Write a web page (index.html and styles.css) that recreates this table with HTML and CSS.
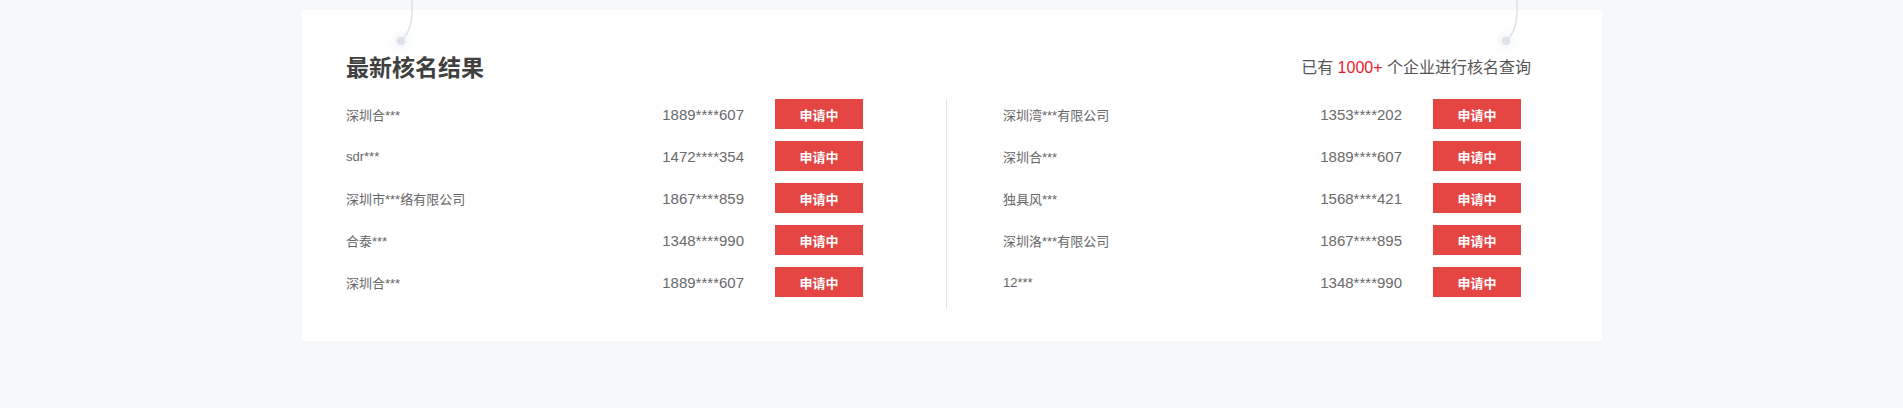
FILE: index.html
```html
<!DOCTYPE html>
<html lang="zh-CN">
<head>
<meta charset="utf-8">
<title>最新核名结果</title>
<link rel="stylesheet" href="styles.css">
</head>
<body>
<div class="page">
  <section class="card">
    <svg class="hook hook-left" width="40" height="60" viewBox="0 0 40 60">
      <defs>
        <radialGradient id="halo1">
          <stop offset="0" stop-color="#e9ecf2" stop-opacity="0.9"/>
          <stop offset="1" stop-color="#ffffff" stop-opacity="0"/>
        </radialGradient>
      </defs>
      <circle cx="14" cy="41" r="15" fill="url(#halo1)"/>
      <path d="M25 0 C26 18 24 31 16 39" fill="none" stroke="#dde1ea" stroke-width="1.5"/>
      <circle cx="14" cy="41" r="4" fill="#dde1ea"/>
    </svg>
    <svg class="hook hook-right" width="40" height="60" viewBox="0 0 40 60">
      <defs>
        <radialGradient id="halo2">
          <stop offset="0" stop-color="#e9ecf2" stop-opacity="0.9"/>
          <stop offset="1" stop-color="#ffffff" stop-opacity="0"/>
        </radialGradient>
      </defs>
      <circle cx="14" cy="41" r="15" fill="url(#halo2)"/>
      <path d="M25 0 C26 18 24 31 16 39" fill="none" stroke="#dde1ea" stroke-width="1.5"/>
      <circle cx="14" cy="41" r="4" fill="#dde1ea"/>
    </svg>

    <header class="card-head">
      <h2 class="title">最新核名结果</h2>
      <p class="summary">已有 <span class="count">1000+</span> 个企业进行核名查询</p>
    </header>

    <div class="lists">
      <ul class="list list-left">
        <li class="row"><span class="name">深圳合***</span><span class="phone">1889****607</span><span class="status">申请中</span></li>
        <li class="row"><span class="name">sdr***</span><span class="phone">1472****354</span><span class="status">申请中</span></li>
        <li class="row"><span class="name">深圳市***络有限公司</span><span class="phone">1867****859</span><span class="status">申请中</span></li>
        <li class="row"><span class="name">合泰***</span><span class="phone">1348****990</span><span class="status">申请中</span></li>
        <li class="row"><span class="name">深圳合***</span><span class="phone">1889****607</span><span class="status">申请中</span></li>
      </ul>
      <ul class="list list-right">
        <li class="row"><span class="name">深圳湾***有限公司</span><span class="phone">1353****202</span><span class="status">申请中</span></li>
        <li class="row"><span class="name">深圳合***</span><span class="phone">1889****607</span><span class="status">申请中</span></li>
        <li class="row"><span class="name">独具风***</span><span class="phone">1568****421</span><span class="status">申请中</span></li>
        <li class="row"><span class="name">深圳洛***有限公司</span><span class="phone">1867****895</span><span class="status">申请中</span></li>
        <li class="row"><span class="name">12***</span><span class="phone">1348****990</span><span class="status">申请中</span></li>
      </ul>
    </div>
  </section>
</div>
</body>
</html>
```

FILE: styles.css
```css
* { box-sizing: border-box; }
html, body { margin: 0; padding: 0; }
body {
  background: #f7f8fa;
  font-family: "Liberation Sans", "Noto Sans CJK SC", sans-serif;
  color: #666;
}
.page {
  width: 1903px;
  height: 408px;
  padding-top: 10px;
}
.card {
  position: relative;
  width: 1300px;
  margin-left: 302px;
  background: #fff;
  padding: 41px 71px 32px 44px;
}
.hook {
  position: absolute;
  top: -10px;
}
.hook-left { left: 85px; }
.hook-right { left: 1190px; }

.card-head {
  display: flex;
  align-items: center;
  justify-content: space-between;
  height: 30px;
  margin-bottom: 18px;
}
.title {
  margin: 0;
  font-family: "Noto Sans CJK SC", sans-serif;
  font-size: 23px;
  font-weight: 700;
  color: #404040;
  line-height: 30px;
}
.summary {
  margin: 3px 0 0;
  font-family: "Liberation Sans", "Noto Sans CJK SC", sans-serif;
  font-size: 16px;
  color: #555;
  line-height: 30px;
}
.count { color: #e5222d; }

.lists {
  display: flex;
}
.list {
  list-style: none;
  margin: 0;
  padding: 0;
}
.list-left {
  width: 601px;
  padding-right: 83px;
  border-right: 1px solid #e6e6e6;
}
.list-right {
  width: 574px;
  padding-left: 56px;
}
.row {
  display: grid;
  grid-template-columns: 1fr auto 88px;
  column-gap: 31px;
  align-items: center;
  height: 42px;
  padding-bottom: 12px;
  font-size: 14px;
}
.name {
  font-family: "Liberation Sans", "Noto Sans CJK SC", sans-serif;
  font-size: 13px;
  color: #666;
}
.phone {
  font-family: "Liberation Sans", sans-serif;
  font-size: 15px;
  color: #6a6a6a;
  text-align: right;
}
.status {
  display: flex;
  align-items: center;
  justify-content: center;
  height: 30px;
  background: #e54644;
  color: #fff;
  font-family: "Noto Sans CJK SC", sans-serif;
  font-size: 13px;
  font-weight: 700;
}
```
